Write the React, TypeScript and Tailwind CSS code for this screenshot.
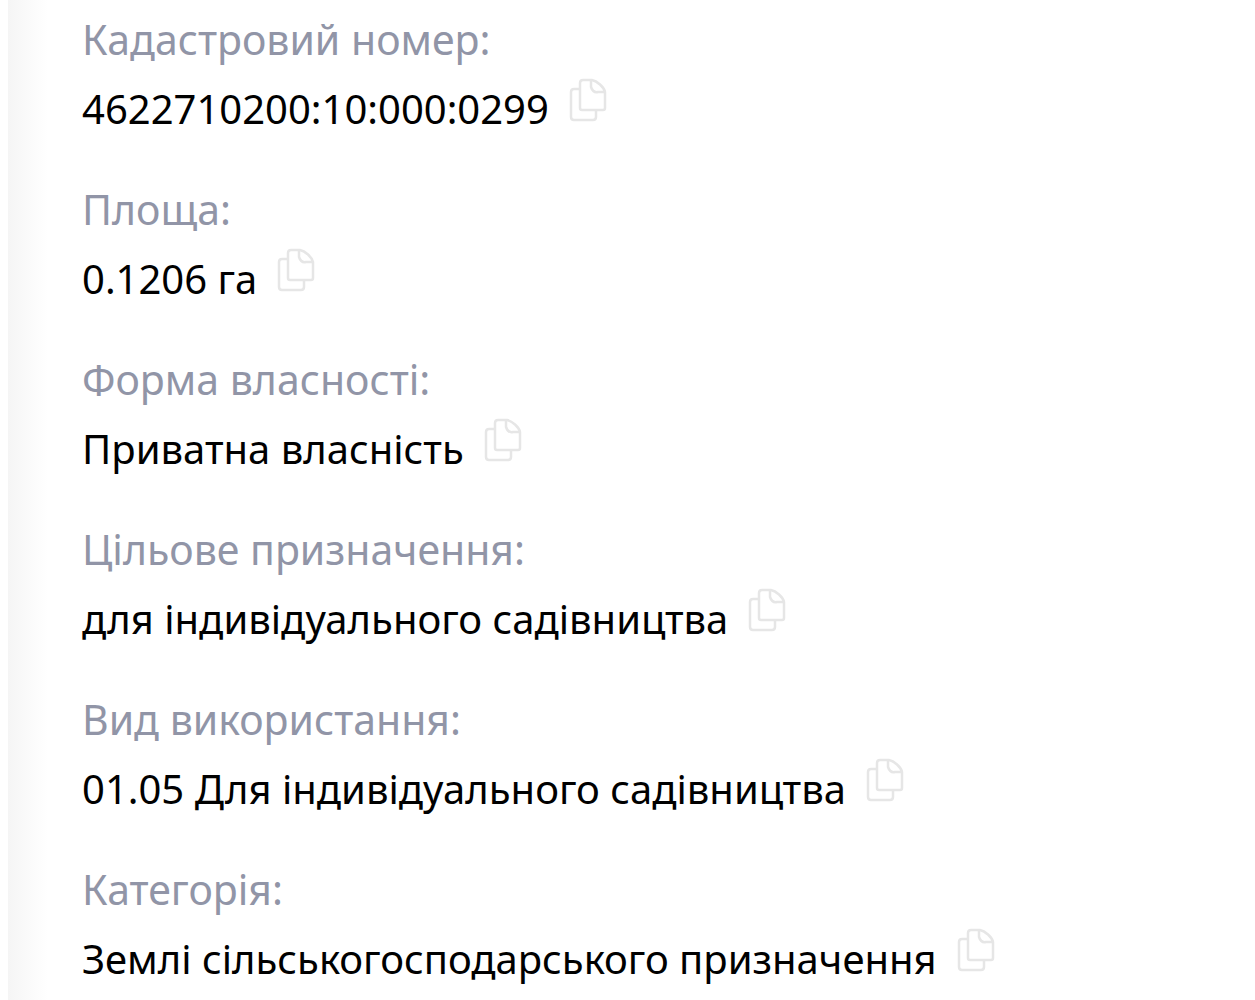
const fields = [
  { label: "Кадастровий номер:", value: "4622710200:10:000:0299" },
  { label: "Площа:", value: "0.1206 га" },
  { label: "Форма власності:", value: "Приватна власність" },
  { label: "Цільове призначення:", value: "для індивідуального садівництва" },
  { label: "Вид використання:", value: "01.05 Для індивідуального садівництва" },
  { label: "Категорія:", value: "Землі сільськогосподарського призначення" },
];

function CopyIcon() {
  return (
    <svg viewBox="0 0 38 44" className="h-11 w-[38px]" fill="none" stroke="currentColor" strokeWidth="2.5" strokeLinejoin="round" aria-hidden="true">
      <path d="M14 2H23C28 3 35 9 36 14V30Q36 32 34 32H13Q11 32 11 30V5Q11 2 14 2Z" />
      <path d="M22 2V9Q24 15 29 14H36" />
      <path d="M11 11H5Q2 11 2 14V39Q2 42 5 42H24Q27 42 27 39V32" />
    </svg>
  );
}

export default function App() {
  return (
    <main className="flex min-h-screen bg-white font-['Noto_Sans','Open_Sans',sans-serif]">
      <div className="ml-2 w-10 shrink-0 bg-linear-to-r from-[#f5f5f5] to-white" />
      <dl className="grow pt-1 pl-[34px] leading-[70px]">
        {fields.map((f) => (
          <div key={f.label} className="pb-[30px]">
            <dt className="text-[41px] text-[#9195a7]">{f.label}</dt>
            <dd className="flex items-start gap-5 text-[40px] text-black">
              <span>{f.value}</span>
              <button type="button" aria-label={"Копіювати " + f.label} className="mt-1 text-[#e6e6e6]">
                <CopyIcon />
              </button>
            </dd>
          </div>
        ))}
      </dl>
    </main>
  );
}
